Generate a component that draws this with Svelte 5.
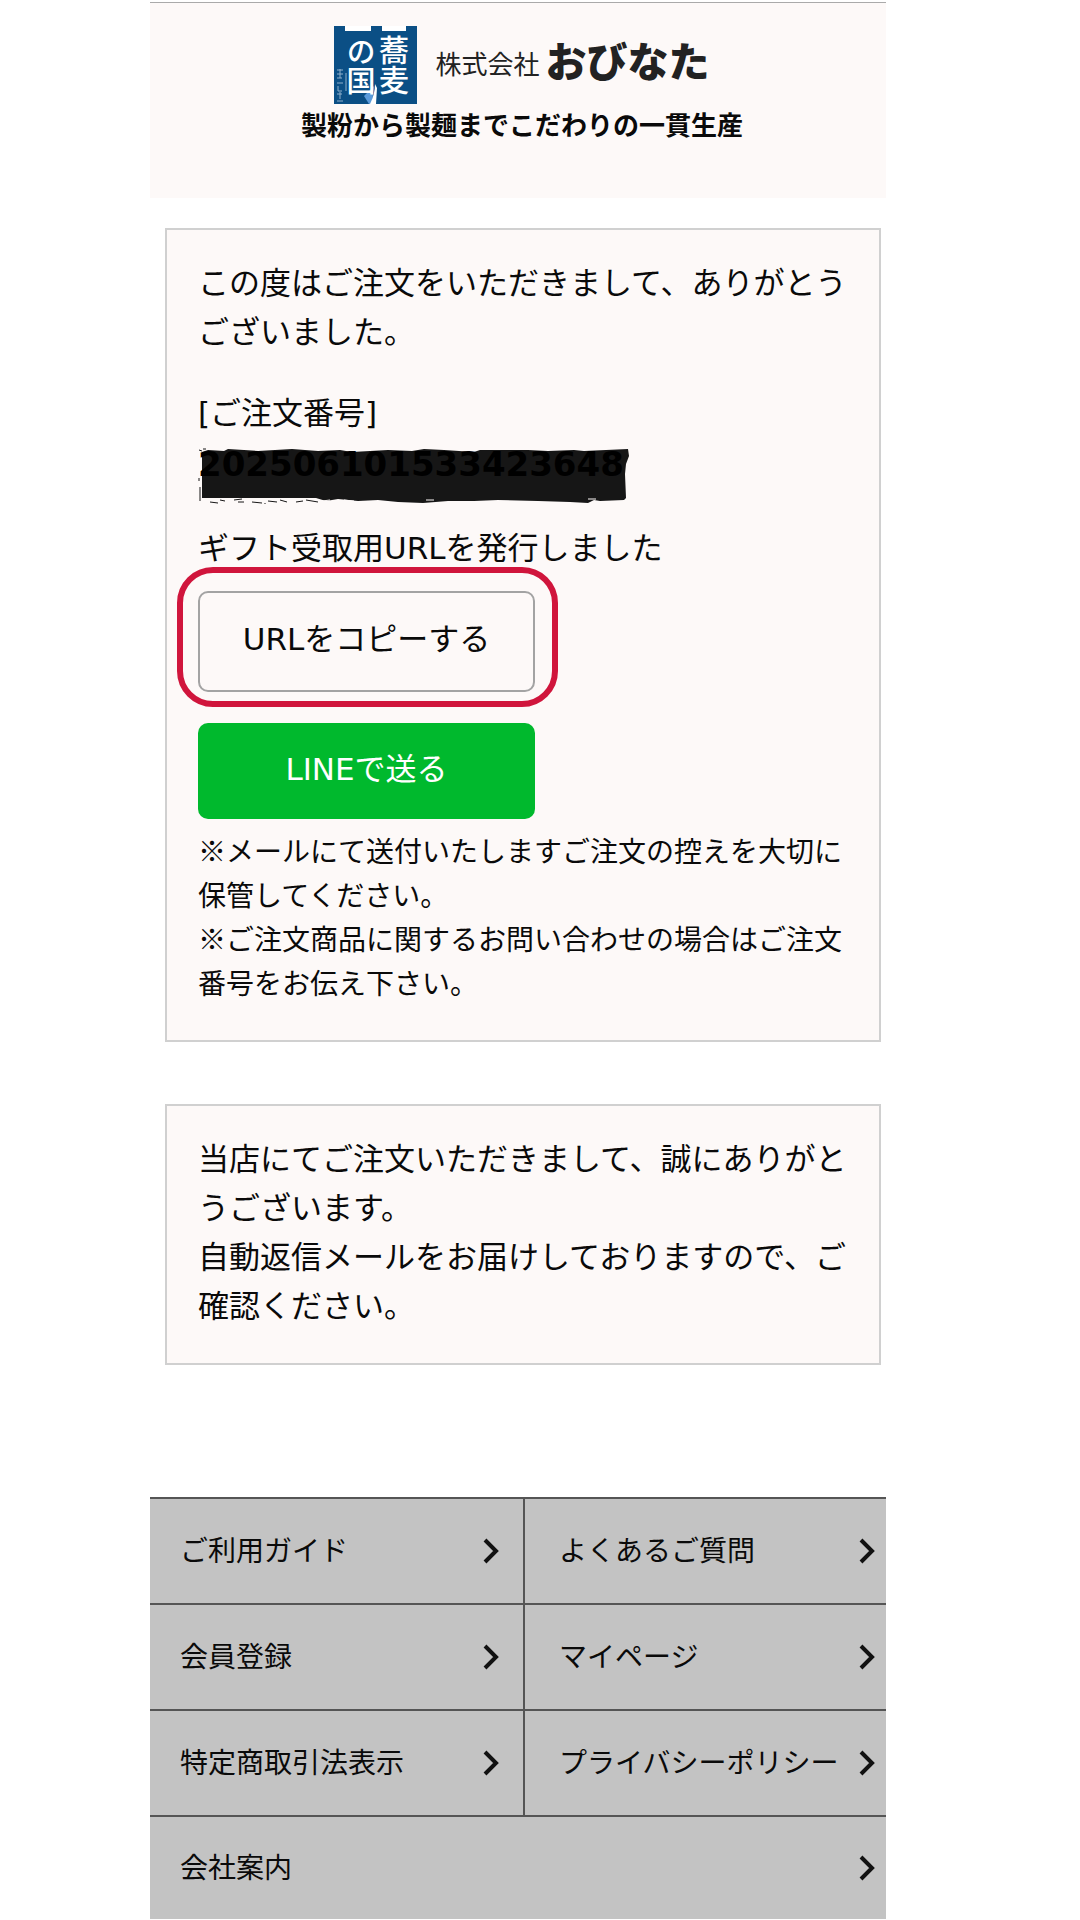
<script lang="ts">
  type NavItem = { label: string; href: string; wide?: boolean }

  const orderNumber = '202506101533423648'

  const navItems: NavItem[] = [
    { label: 'ご利用ガイド', href: '#guide' },
    { label: 'よくあるご質問', href: '#faq' },
    { label: '会員登録', href: '#register' },
    { label: 'マイページ', href: '#mypage' },
    { label: '特定商取引法表示', href: '#law' },
    { label: 'プライバシーポリシー', href: '#privacy' },
    { label: '会社案内', href: '#company', wide: true },
  ]

  function copyUrl(): void {
    navigator.clipboard?.writeText(location.href)
  }
</script>

<div class="page">
  <header>
    <div class="brand">
      <svg class="mark" viewBox="0 0 83 78" aria-hidden="true">
        <path d="M0 0H11V5H37V0H48V5H72V0H83V78H0Z" fill="#0b4f85" />
        <path d="M11 0H37V5H11ZM48 0H72V5H48Z" fill="#fff" />
        <path d="M30 70L40 60L38 78H35Z" fill="#5b9bdb" />
        <path d="M41 58Q41 68 36 78H42L43 62Z" fill="#fff" />
        <g fill="#fff" class="brush">
          <text x="60" y="9" font-size="30" font-weight="500">蕎麦</text>
          <text x="27" y="11" font-size="29" font-weight="500">の国</text>
        </g>
        <path
          d="M3 44h6M3 48h6M6 43v9M3 52h5M3 57h6M4 60v5h4M3 68h5M6 66v7M3 75h6M12 47v18"
          stroke="#8fb0cb"
          fill="none"
        />
      </svg>
      <span class="corp">株式会社</span>
      <span class="name">おびなた</span>
    </div>
    <p class="tagline">製粉から製麺までこだわりの一貫生産</p>
  </header>

  <main>
    <section class="card">
      <p>この度はご注文をいただきまして、ありがとうございました。</p>

      <div class="order">
        <p>[ご注文番号]</p>
        <p class="number">
          <span class="masked">
            <svg viewBox="0 0 432 56" aria-hidden="true">
              <path
                d="M4 4L10 2L26 3L30 1L60 3L94 1L120 3L142 2L154 4L190 2L214 3L226 1L246 2L276 4L282 2L330 2L350 3L376 2L386 3L430 1L431 8L428 16L427 26L428 50L426 52L402 53L396 52L390 55L372 54L340 53L300 52L276 53L250 53L225 55L200 54L180 52L160 53L140 51L128 53L118 50L4 50Z"
                fill="#161616"
              />
              <path
                d="M1 2l3 1M5 1l3 0M1 30v3M2 39v14M12 54l8 1M22 52l5 1M36 52l8 -1M40 54l6 0M54 54l10 1M70 53l9 1M82 52l7 2M98 54l7 -1M108 52l12 2M66 56l2 0"
                stroke="#161616"
                fill="none"
              />
              <path d="M124 53l8 -1M146 52l10 1M228 52l8 0M390 51l8 0" stroke="#fdf9f8" />
            </svg>
            <strong>{orderNumber}</strong>
          </span>
        </p>
      </div>

      <p>ギフト受取用URLを発行しました</p>

      <div class="actions">
        <div class="highlight">
          <button class="btn btn-copy" type="button" onclick={copyUrl}>URLをコピーする</button>
        </div>
        <button class="btn btn-line" type="button">LINEで送る</button>
      </div>

      <p class="note">※メールにて送付いたしますご注文の控えを大切に保管してください。</p>
      <p class="note">※ご注文商品に関するお問い合わせの場合はご注文番号をお伝え下さい。</p>
    </section>

    <section class="card card-message">
      <p>当店にてご注文いただきまして、誠にありがとうございます。</p>
      <p>自動返信メールをお届けしておりますので、ご確認ください。</p>
    </section>
  </main>

  <nav>
    {#each navItems as item}
      <a href={item.href} class:wide={item.wide}>
        <span>{item.label}</span>
        <svg class="chevron" viewBox="0 0 16 26" aria-hidden="true">
          <path d="M2 2L13 13L2 24" fill="none" stroke="#111" stroke-width="4" />
        </svg>
      </a>
    {/each}
  </nav>
</div>

<style>
  :global(body) {
    margin: 0;
    background: #fff;
  }

  .page {
    --tint: #fdf9f8;
    padding: 2px 194px 0 150px;
    color: #0a0a0a;
    font-family: 'DejaVu Sans', 'Noto Sans CJK JP', sans-serif;
    font-size: 31px;
    line-height: 49px;
  }

  p {
    margin: 0;
  }

  header {
    display: flex;
    flex-direction: column;
    align-items: center;
    box-sizing: border-box;
    height: 196px;
    padding-top: 23px;
    padding-left: 8px;
    border-top: 1px solid #aaa;
    background: var(--tint);
  }

  .brand {
    display: flex;
    align-items: flex-start;
    font-family: 'Noto Sans CJK JP', sans-serif;
    line-height: 66px;
    color: #222;
    white-space: nowrap;
  }

  .mark {
    width: 83px;
    height: 78px;
    margin-right: 18px;
  }

  .brush {
    writing-mode: vertical-rl;
  }

  .corp {
    margin-right: 6px;
    font-size: 26px;
    line-height: 74px;
  }

  .name {
    font-size: 41px;
    font-weight: 900;
  }

  .tagline {
    font-size: 26px;
    font-weight: 700;
    line-height: 44px;
    white-space: nowrap;
  }

  main {
    display: flex;
    flex-direction: column;
    gap: 62px;
    padding: 30px 5px 0 15px;
  }

  .card {
    padding: 29px 29px 36px 31px;
    border: 2px solid #d0d0d0;
    background: var(--tint);
    overflow-wrap: anywhere;
  }

  .card-message {
    padding-bottom: 32px;
  }

  .order {
    margin: 32px 0 35px;
  }

  .number {
    margin-top: 2px;
    font-size: 34px;
  }

  .masked {
    position: relative;
    display: inline-block;
    z-index: 0;
  }

  .masked svg {
    position: absolute;
    top: 8px;
    left: 0;
    z-index: -1;
    width: 432px;
    height: 56px;
  }

  .masked strong {
    color: #000;
  }

  .actions {
    display: flex;
    flex-direction: column;
    align-items: flex-start;
    gap: 31px;
    margin: 18px 0 9px;
  }

  .highlight {
    position: relative;
  }

  /* marker ring round the copy button */
  .highlight::after {
    content: '';
    position: absolute;
    inset: -24px -23px -15px -21px;
    box-sizing: border-box;
    border: 6px solid #d0153c;
    border-radius: 36px;
    pointer-events: none;
  }

  .btn {
    box-sizing: border-box;
    width: 337px;
    height: 96px;
    padding: 0 0 4px;
    border: none;
    border-radius: 10px;
    font: inherit;
    cursor: pointer;
  }

  .btn-copy {
    display: block;
    height: 101px;
    border: 2px solid #a3a3a3;
    background: transparent;
    color: inherit;
  }

  .btn-line {
    background: #00b92d;
    color: #fff;
  }

  .note {
    font-family: 'Noto Sans CJK JP', sans-serif;
    font-size: 28px;
    line-height: 44px;
  }

  nav {
    display: grid;
    grid-template-columns: 375fr 361fr;
    margin-top: 132px;
    border-top: 2px solid #555;
    background: #c3c3c3;
  }

  nav a {
    display: flex;
    align-items: center;
    justify-content: space-between;
    box-sizing: border-box;
    height: 106px;
    padding: 0 11px 0 34px;
    border-bottom: 2px solid #555;
    color: inherit;
    font-size: 28px;
    text-decoration: none;
    white-space: nowrap;
  }

  nav a:nth-child(odd) {
    padding-right: 24px;
    padding-left: 30px;
    border-right: 2px solid #555;
  }

  nav a.wide {
    grid-column: 1 / -1;
    height: 102px;
    padding-right: 11px;
    border: none;
  }

  .chevron {
    width: 16px;
    height: 26px;
  }
</style>
